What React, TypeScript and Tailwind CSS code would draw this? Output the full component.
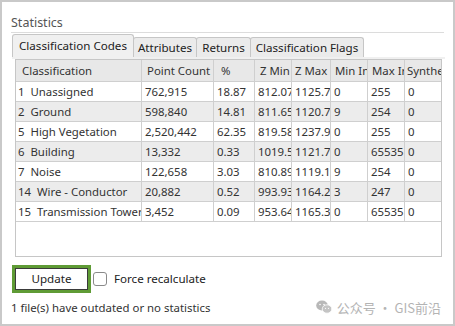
import React from "react";

type Row = string[];

const cols = [126, 72, 41, 37, 39, 37, 37, 36];
const headers = ["Classification", "Point Count", "%", "Z Min", "Z Max", "Min In", "Max Ir", "Synthe"];
const headPad = ["pl-[6px]", "pl-[5px]", "pl-[7px]", "pl-[5px]", "pl-[3px]", "pl-[4px]", "pl-[4px]", "pl-[2px]"];

const rows: Row[] = [
  ["1  Unassigned", "762,915", "18.87", "812.07", "1125.7", "0", "255", "0"],
  ["2  Ground", "598,840", "14.81", "811.65", "1120.7", "9", "254", "0"],
  ["5  High Vegetation", "2,520,442", "62.35", "819.58", "1237.9", "0", "255", "0"],
  ["6  Building", "13,332", "0.33", "1019.5", "1121.7", "0", "65535", "0"],
  ["7  Noise", "122,658", "3.03", "810.89", "1119.1", "9", "254", "0"],
  ["14  Wire - Conductor", "20,882", "0.52", "993.93", "1164.2", "3", "247", "0"],
  ["15  Transmission Tower", "3,452", "0.09", "953.64", "1165.3", "0", "65535", "0"],
];

const tabs = [
  { label: "Classification Codes", w: "w-[122px]", active: true },
  { label: "Attributes", w: "w-[64px]", active: false },
  { label: "Returns", w: "w-[55px]", active: false },
  { label: "Classification Flags", w: "w-[114px]", active: false },
];

const Cell: React.FC<{ text: string; w: number; last: boolean; pad: string }> = ({ text, w, last, pad }) => (
  <div
    className={`h-full overflow-hidden whitespace-pre ${pad} ${last ? "" : "border-r border-[#cfcfcf]"}`}
    style={{ width: w }}
  >
    {text}
  </div>
);

const App: React.FC = () => {
  return (
    <div
      className="relative w-[455px] h-[326px] border-2 border-[#c9c9c9] bg-white text-[#333] text-[11.4px]"
      style={{ fontFamily: '"Noto Sans", "Open Sans", sans-serif' }}
    >
      <div className="mx-[9px] pt-[12px] border-b border-[#dcdcdc]">
        <div className="h-[18px] leading-[18px] text-[12.5px] text-[#555]">Statistics</div>
      </div>

      <div className="ml-[10px] h-[24px] flex items-end">
        {tabs.map((t) => (
          <div
            key={t.label}
            className={`${t.w} ${t.active ? "h-[23px] bg-[#f0f0f0]" : "h-[20px] bg-[#ebebeb]"} -mr-px border border-b-0 border-[#c6c6c6] rounded-t-[3px] flex items-center justify-center text-[11.6px] text-[#222] leading-none`}
          >
            {t.label}
          </div>
        ))}
      </div>

      <div className="ml-[10px] w-[433px] h-[2px] bg-[#f0f0f0]" />

      <div className="ml-[13px] w-[427px] h-[198px] border border-[#c6c6c6] bg-white">
        <div className="flex h-[22px] leading-[21px] bg-[#e8e8e8] border-b border-[#cfcfcf] text-[#333]">
          {headers.map((h, i) => (
            <Cell key={h} text={h} w={cols[i]} last={i === cols.length - 1} pad={headPad[i]} />
          ))}
        </div>
        {rows.map((r, ri) => (
          <div
            key={ri}
            className={`flex h-[20px] leading-[19px] border-b border-[#cfcfcf] ${ri % 2 === 1 ? "bg-[#ececec]" : "bg-white"}`}
          >
            {r.map((c, i) => (
              <Cell key={i} text={c} w={cols[i]} last={i === cols.length - 1} pad={i === 0 ? "pl-[2px]" : "pl-[3px]"} />
            ))}
          </div>
        ))}
      </div>

      <div className="ml-[10px] mt-[8px] flex items-center gap-[1px]">
        <div className="w-[79px] h-[28px] border-[3px] border-[#5f9b35] bg-white">
          <div className="w-full h-full border border-[#3a3a3a] flex items-center justify-center text-[11.6px] text-[#222]">
            Update
          </div>
        </div>
        <div className="ml-[1px] w-[14px] h-[14px] rounded-[3px] border border-[#8a8a8a] bg-white" />
        <div className="ml-[6px] text-[11.6px] text-[#222]">Force recalculate</div>
      </div>

      <div className="ml-[9px] mt-[7px] text-[11.4px] leading-[16px] text-[#333]">
        1 file(s) have outdated or no statistics
      </div>

      <div className="absolute right-[12px] bottom-[7px] flex items-center gap-[5px] text-[#b4b4b4] text-[13px]">
        <svg width="16" height="14" viewBox="0 0 16 14">
          <ellipse cx="6" cy="5.5" rx="5.8" ry="5" fill="#b8b8b8" />
          <ellipse cx="11" cy="9" rx="4.8" ry="4.2" fill="#c4c4c4" stroke="#fff" strokeWidth="0.8" />
          <circle cx="4" cy="4.5" r="0.8" fill="#fff" />
          <circle cx="8" cy="4.5" r="0.8" fill="#fff" />
          <circle cx="9.5" cy="8.3" r="0.6" fill="#fff" />
          <circle cx="12.5" cy="8.3" r="0.6" fill="#fff" />
        </svg>
        <span style={{ fontFamily: '"Noto Sans CJK SC", "Noto Sans", sans-serif' }}>公众号 · GIS前沿</span>
      </div>
    </div>
  );
};

export default App;
